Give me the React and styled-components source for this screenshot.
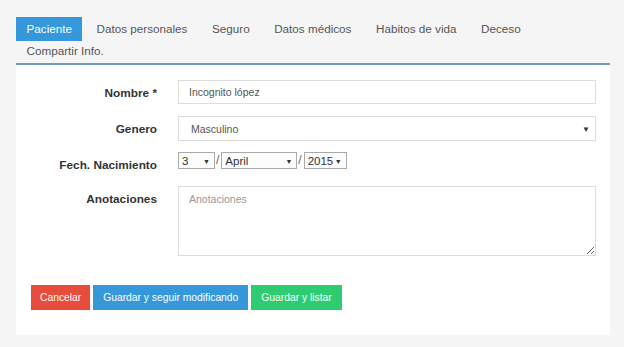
import React from 'react';
import styled, { createGlobalStyle } from 'styled-components';

const GlobalStyle = createGlobalStyle`
    body {
        margin: 0;
        background: #f5f5f5;
        font-family: "Liberation Sans", Arial, sans-serif;
    }
`

const Page = styled.div`
    width: 594px;
    padding: 17px 14px 12px 16px;
`

const TabList = styled.div`
    display: flex;
    flex-wrap: wrap;
    border-bottom: 2px solid #6e9cc4;
`

const Tab = styled.div`
    padding: 0 10.5px;
    margin-right: 3.5px;
    height: ${props => props.last ? '22px' : '24px'};
    line-height: ${props => props.last ? '20px' : '24px'};
    font-size: 11.7px;
    color: ${props => props.active ? '#fff' : '#555'};
    background: ${props => props.active ? '#3498db' : 'transparent'};
`

const Panel = styled.div`
    background: #fff;
    padding: 15px 14px 25px 15px;
`

const Form = styled.div`
    display: grid;
    grid-template-columns: 126px 1fr;
    grid-template-rows: 25px 25px 23px auto;
    column-gap: 21px;
    row-gap: 11px;
`

const Label = styled.div`
    text-align: right;
    font-size: 11.8px;
    font-weight: bold;
    color: #333;
    line-height: 22px;
    padding-top: 2px;
`

const TextInput = styled.input`
    box-sizing: border-box;
    width: 100%;
    height: 24px;
    border: 1px solid #ddd;
    padding: 0 10px;
    font-family: inherit;
    font-size: 10.5px;
    color: #555;
    outline: none;
`

const SelectWrap = styled.div`
    position: relative;
    display: ${props => props.small ? 'inline-block' : 'block'};
    height: ${props => props.small ? '17px' : 'auto'};
`

const Select = styled.select`
    appearance: none;
    box-sizing: border-box;
    width: 100%;
    height: 25px;
    border: 1px solid #ddd;
    background: #fff;
    padding: 0 12px;
    font-family: inherit;
    font-size: 10.5px;
    color: #555;
    outline: none;
`

const Caret = styled.span`
    position: absolute;
    right: ${props => props.small ? '5px' : '6px'};
    top: 50%;
    transform: translateY(-50%);
    font-size: ${props => props.small ? '7px' : '8px'};
    color: #333;
    pointer-events: none;
`

const DateRow = styled.div`
    display: flex;
    align-items: flex-start;
`

const SmallSelect = styled.select`
    appearance: none;
    box-sizing: border-box;
    display: block;
    height: 17px;
    width: ${props => props.w}px;
    border: 1px solid #aaa;
    background: #fcfcfc;
    padding: 0 3px;
    font-family: inherit;
    font-size: 11.5px;
    color: #333;
    outline: none;
`

const Slash = styled.span`
    font-size: 12px;
    color: #666;
    line-height: 17px;
    margin: 0 2px 0 1px;
`

const TextArea = styled.textarea`
    box-sizing: border-box;
    width: 100%;
    height: 70px;
    border: 1px solid #ddd;
    padding: 6px 10px;
    font-family: inherit;
    font-size: 10.5px;
    color: #555;
    outline: none;
    display: block;
    &::placeholder {
        color: #999;
    }
`

const Actions = styled.div`
    display: flex;
    gap: 3px;
    margin-top: 29px;
`

const Button = styled.button`
    border: none;
    height: 25px;
    padding: 0 ${props => props.pad}px;
    font-family: inherit;
    font-size: 10.3px;
    color: #fff;
    background: ${props => props.color};
`

const tabs = ['Paciente', 'Datos personales', 'Seguro', 'Datos médicos', 'Habitos de vida', 'Deceso', 'Compartir Info.']

const App = () => {
    return (
        <>
            <GlobalStyle />
            <Page>
                <TabList>
                    {tabs.map((t, i) => (
                        <Tab key={i} active={i === 0} last={i === tabs.length - 1}>{t}</Tab>
                    ))}
                </TabList>
                <Panel>
                    <Form>
                        <Label>Nombre *</Label>
                        <TextInput defaultValue="Incognito lópez" />

                        <Label>Genero</Label>
                        <SelectWrap>
                            <Select defaultValue="m">
                                <option value="m">Masculino</option>
                                <option value="f">Femenino</option>
                            </Select>
                            <Caret>▼</Caret>
                        </SelectWrap>

                        <Label>Fech. Nacimiento</Label>
                        <DateRow>
                            <SelectWrap small>
                                <SmallSelect w={37} defaultValue="3">
                                    <option value="3">3</option>
                                </SmallSelect>
                                <Caret small>▼</Caret>
                            </SelectWrap>
                            <Slash>/</Slash>
                            <SelectWrap small>
                                <SmallSelect w={76} defaultValue="April">
                                    <option value="April">April</option>
                                </SmallSelect>
                                <Caret small>▼</Caret>
                            </SelectWrap>
                            <Slash>/</Slash>
                            <SelectWrap small>
                                <SmallSelect w={43} defaultValue="2015">
                                    <option value="2015">2015</option>
                                </SmallSelect>
                                <Caret small>▼</Caret>
                            </SelectWrap>
                        </DateRow>

                        <Label>Anotaciones</Label>
                        <TextArea placeholder="Anotaciones" />
                    </Form>
                    <Actions>
                        <Button color="#e74c3c" pad={9}>Cancelar</Button>
                        <Button color="#3498db" pad={10}>Guardar y seguir modificando</Button>
                        <Button color="#2ecc71" pad={10}>Guardar y listar</Button>
                    </Actions>
                </Panel>
            </Page>
        </>
    )
}

export default App;
